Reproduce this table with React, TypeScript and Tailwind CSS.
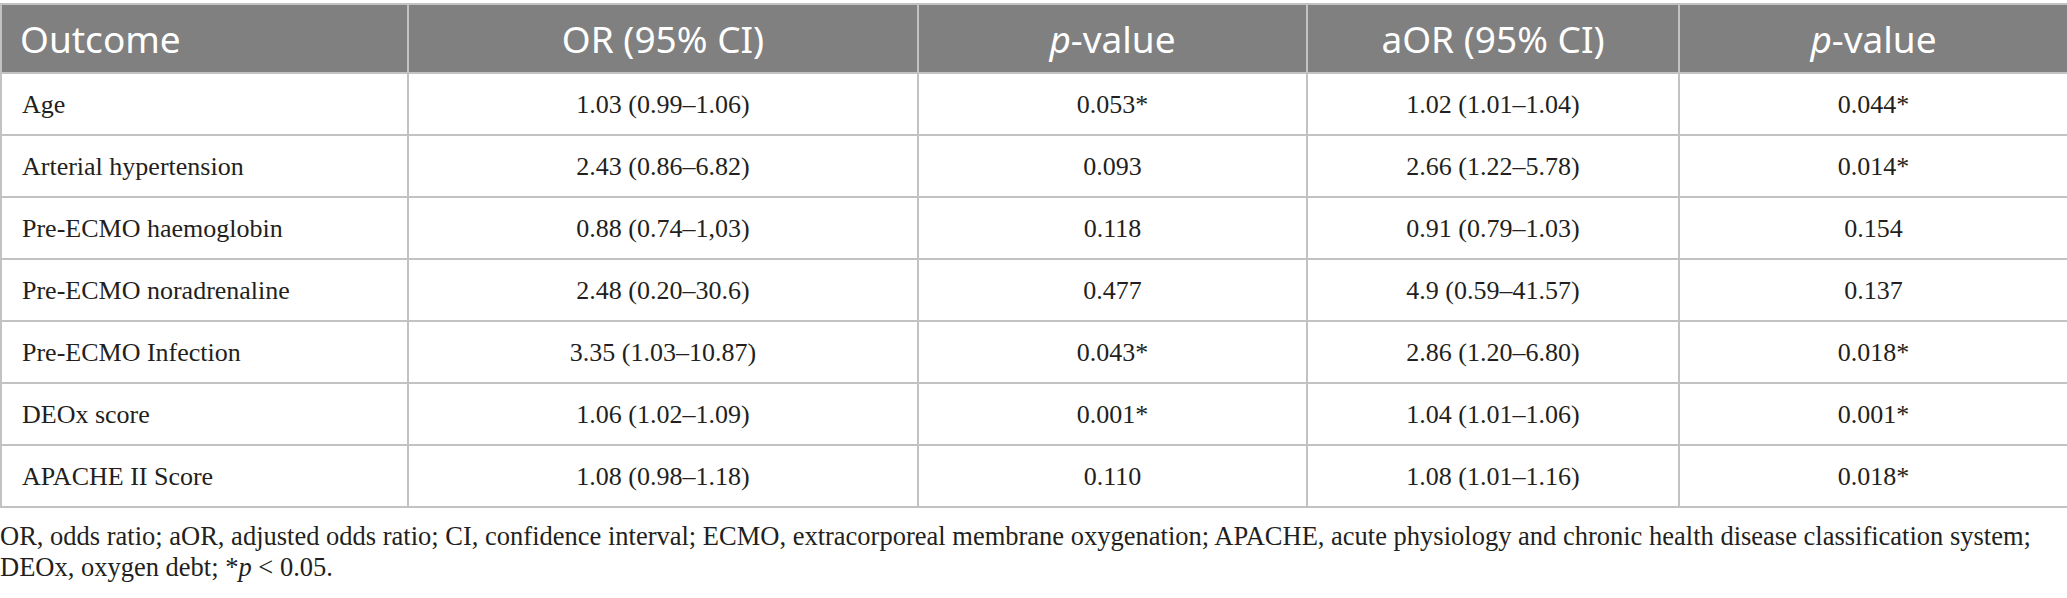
const rows = [
  ["Age", "1.03 (0.99–1.06)", "0.053*", "1.02 (1.01–1.04)", "0.044*"],
  ["Arterial hypertension", "2.43 (0.86–6.82)", "0.093", "2.66 (1.22–5.78)", "0.014*"],
  ["Pre-ECMO haemoglobin", "0.88 (0.74–1,03)", "0.118", "0.91 (0.79–1.03)", "0.154"],
  ["Pre-ECMO noradrenaline", "2.48 (0.20–30.6)", "0.477", "4.9 (0.59–41.57)", "0.137"],
  ["Pre-ECMO Infection", "3.35 (1.03–10.87)", "0.043*", "2.86 (1.20–6.80)", "0.018*"],
  ["DEOx score", "1.06 (1.02–1.09)", "0.001*", "1.04 (1.01–1.06)", "0.001*"],
  ["APACHE II Score", "1.08 (0.98–1.18)", "0.110", "1.08 (1.01–1.16)", "0.018*"],
];

export default function App() {
  return (
    <div className="w-[2067px] h-[598px] bg-white pt-[3px] font-['Liberation_Serif',serif] text-[#231f20]">
      {/* Table */}
      <table className="w-[2067px] table-fixed border-collapse">
        <colgroup>
          <col className="w-[407px]" />
          <col className="w-[510px]" />
          <col className="w-[389px]" />
          <col className="w-[372px]" />
          <col className="w-[389px]" />
        </colgroup>
        <thead>
          <tr className="bg-[#7f807f] text-white font-['Noto_Sans',sans-serif] text-[37px] font-normal leading-none">
            <th className="h-[69px] border-2 border-[#c2c2c2] pl-[18px] text-left font-normal">Outcome</th>
            <th className="border-2 border-[#c2c2c2] text-center font-normal">OR (95% CI)</th>
            <th className="border-2 border-[#c2c2c2] text-center font-normal">
              <span className="italic">p</span>-value
            </th>
            <th className="border-2 border-[#c2c2c2] text-center font-normal">aOR (95% CI)</th>
            <th className="border-2 border-[#c2c2c2] text-center font-normal">
              <span className="italic">p</span>-value
            </th>
          </tr>
        </thead>
        <tbody className="text-[26px]">
          {rows.map((r) => (
            <tr key={r[0]}>
              <td className="h-[62px] border-2 border-[#c2c2c2] pl-[20px] text-left">{r[0]}</td>
              <td className="border-2 border-[#c2c2c2] text-center">{r[1]}</td>
              <td className="border-2 border-[#c2c2c2] text-center">{r[2]}</td>
              <td className="border-2 border-[#c2c2c2] text-center">{r[3]}</td>
              <td className="border-2 border-[#c2c2c2] text-center">{r[4]}</td>
            </tr>
          ))}
        </tbody>
      </table>

      {/* Footnote */}
      <p className="mt-[13px] text-[26.5px] leading-[31px] whitespace-nowrap">
        OR, odds ratio; aOR, adjusted odds ratio; CI, confidence interval; ECMO, extracorporeal membrane oxygenation; APACHE, acute physiology and chronic health disease classification system;
        <br />
        DEOx, oxygen debt; *<span className="italic">p</span> &lt; 0.05.
      </p>
    </div>
  );
}
